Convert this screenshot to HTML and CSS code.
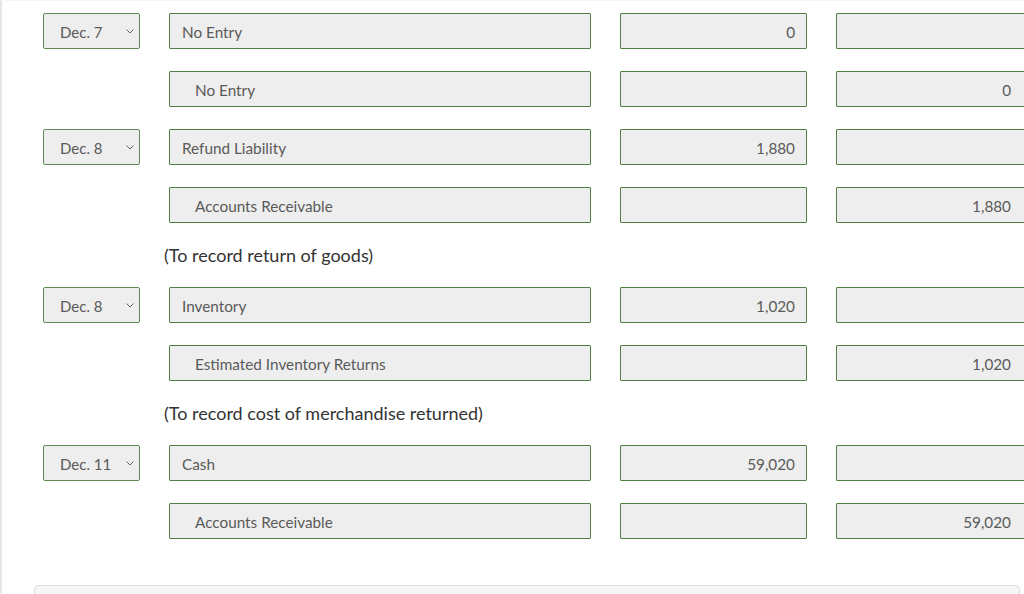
FILE: index.html
```html
<!DOCTYPE html>
<html>
<head>
<meta charset="utf-8">
<link rel="stylesheet" href="styles.css">
</head>
<body>
<div class="page">
  <div class="journal">
    <div class="row">
      <div class="date"><span>Dec. 7</span><svg class="chev" width="8" height="5" viewBox="0 0 8 5"><path d="M0.5 0.5 L4 4 L7.5 0.5" fill="none" stroke="#666" stroke-width="1"/></svg></div>
      <div class="field account">No Entry</div>
      <div class="field amount debit">0</div>
      <div class="field amount credit"></div>
    </div>
    <div class="row">
      <div class="date-spacer"></div>
      <div class="field account indent">No Entry</div>
      <div class="field amount debit"></div>
      <div class="field amount credit">0</div>
    </div>
    <div class="row">
      <div class="date"><span>Dec. 8</span><svg class="chev" width="8" height="5" viewBox="0 0 8 5"><path d="M0.5 0.5 L4 4 L7.5 0.5" fill="none" stroke="#666" stroke-width="1"/></svg></div>
      <div class="field account">Refund Liability</div>
      <div class="field amount debit">1,880</div>
      <div class="field amount credit"></div>
    </div>
    <div class="row">
      <div class="date-spacer"></div>
      <div class="field account indent">Accounts Receivable</div>
      <div class="field amount debit"></div>
      <div class="field amount credit">1,880</div>
    </div>
    <div class="memo">(To record return of goods)</div>
    <div class="row">
      <div class="date"><span>Dec. 8</span><svg class="chev" width="8" height="5" viewBox="0 0 8 5"><path d="M0.5 0.5 L4 4 L7.5 0.5" fill="none" stroke="#666" stroke-width="1"/></svg></div>
      <div class="field account">Inventory</div>
      <div class="field amount debit">1,020</div>
      <div class="field amount credit"></div>
    </div>
    <div class="row">
      <div class="date-spacer"></div>
      <div class="field account indent">Estimated Inventory Returns</div>
      <div class="field amount debit"></div>
      <div class="field amount credit">1,020</div>
    </div>
    <div class="memo">(To record cost of merchandise returned)</div>
    <div class="row">
      <div class="date"><span>Dec. 11</span><svg class="chev" width="8" height="5" viewBox="0 0 8 5"><path d="M0.5 0.5 L4 4 L7.5 0.5" fill="none" stroke="#666" stroke-width="1"/></svg></div>
      <div class="field account">Cash</div>
      <div class="field amount debit">59,020</div>
      <div class="field amount credit"></div>
    </div>
    <div class="row">
      <div class="date-spacer"></div>
      <div class="field account indent">Accounts Receivable</div>
      <div class="field amount debit"></div>
      <div class="field amount credit">59,020</div>
    </div>
  </div>
  <div class="panel"></div>
</div>
</body>
</html>
```
FILE: styles.css
```css
html, body {
  margin: 0;
  padding: 0;
  background: #ffffff;
  overflow: hidden;
}
body {
  font-family: Lato, "Open Sans", sans-serif;
  width: 1024px;
  height: 594px;
}
.page {
  border-left: 2px solid #e6e6e6;
  border-top: 1px solid #f6f6f6;
  height: 593px;
  box-sizing: border-box;
}
.journal {
  display: flex;
  flex-direction: column;
  gap: 22px;
  padding: 12px 0 0 41px;
}
.row {
  display: flex;
  gap: 29px;
  height: 36px;
  width: 1010px;
}
.date, .date-spacer {
  width: 97px;
  flex: none;
  box-sizing: border-box;
}
.date {
  display: flex;
  align-items: center;
  justify-content: space-between;
  padding: 1px 5px 0 16px;
  border: 1px solid #5f8b56;
  border-radius: 2px;
  background: #eeeeee;
  font-size: 15px;
  color: #5a5a5a;
}
.chev {
  display: block;
  margin-top: 0;
}
.field {
  box-sizing: border-box;
  height: 36px;
  padding-top: 1px;
  border: 1px solid #4f7f43;
  border-radius: 1px;
  background: #eeeeee;
  font-size: 15.3px;
  color: #5a5a5a;
  display: flex;
  align-items: center;
  flex: none;
}
.account {
  width: 422px;
  padding-left: 12px;
}
.account.indent {
  padding-left: 25px;
}
.amount {
  width: 187px;
  justify-content: flex-end;
  padding-right: 11px;
}
.credit {
  width: 196px;
  padding-right: 20px;
}
.memo {
  height: 20px;
  line-height: 20px;
  margin-left: 121px;
  font-size: 18px;
  color: #333333;
}
.panel {
  margin: 46px 0 0 32px;
  width: 986px;
  height: 30px;
  border: 1px solid #dedede;
  border-radius: 4px;
  background: #f5f5f5;
  box-sizing: border-box;
}
```
